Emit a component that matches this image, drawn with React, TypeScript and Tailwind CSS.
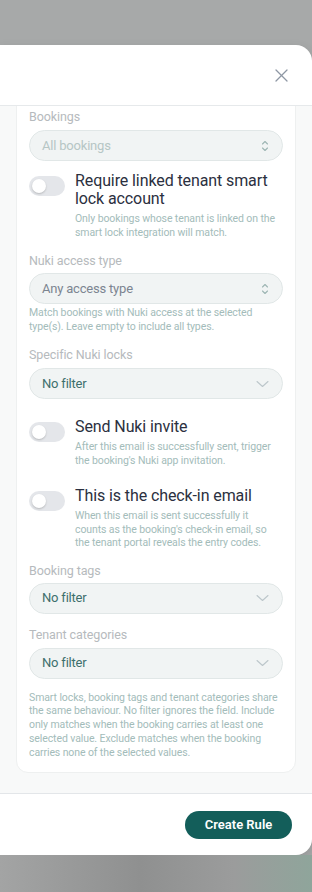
import React from "react";

const font = { fontFamily: 'Roboto, "Noto Sans", sans-serif' };

function UpDown() {
  return (
    <svg width="8" height="12" viewBox="0 0 8 12" fill="none" stroke="#9db6b4" strokeWidth="1.1" strokeLinecap="round" strokeLinejoin="round">
      <path d="M1.5 4 L4 1.5 L6.5 4" />
      <path d="M1.5 8 L4 10.5 L6.5 8" />
    </svg>
  );
}

function Down() {
  return (
    <svg width="13" height="8" viewBox="0 0 13 8" fill="none" stroke="#bcc6ca" strokeWidth="1.1" strokeLinecap="round" strokeLinejoin="round">
      <path d="M1 1.5 L6.5 6.5 L12 1.5" />
    </svg>
  );
}

function Select({ text, color, icon }: { text: string; color: string; icon: "updown" | "down" }) {
  return (
    <div className="flex h-[31px] items-center justify-between rounded-full border border-[#e1e7e7] bg-[#f1f4f4] pl-3 pr-[13px]">
      <span className={`text-[13px] tracking-[-0.2px] ${color}`}>{text}</span>
      {icon === "updown" ? <UpDown /> : <Down />}
    </div>
  );
}

function Toggle() {
  return (
    <div className="mt-1 flex h-5 w-9 shrink-0 items-center rounded-full bg-[#e4e6ea] pl-[3px]">
      <div className="h-[14px] w-[14px] rounded-full bg-white shadow-[0_1px_2px_rgba(0,0,0,0.2)]" />
    </div>
  );
}

function ToggleRow({ title, desc, className }: { title: string; desc: React.ReactNode; className: string }) {
  return (
    <div className={`flex items-start gap-[10px] ${className}`}>
      <Toggle />
      <div className="flex flex-col">
        <div className="text-[16px] leading-[18px] tracking-[-0.1px] text-[#2b3040]">{title}</div>
        <div className="mt-1 text-[10.5px] leading-[13.5px] tracking-[-0.1px] text-[#a3bcba]">{desc}</div>
      </div>
    </div>
  );
}

function Label({ children, className }: { children: React.ReactNode; className: string }) {
  return <div className={`text-[12.5px] leading-4 tracking-[-0.1px] text-[#b6babd] ${className}`}>{children}</div>;
}

export default function App() {
  return (
    <div className="flex h-[892px] w-[312px] flex-col overflow-hidden bg-[#a7a9a9]" style={font}>
      <div className="h-[45px] shrink-0" />
      <div className="flex h-[810px] shrink-0 flex-col overflow-hidden rounded-r-2xl bg-white shadow-[0_4px_12px_rgba(0,0,0,0.12)]">
        <div className="flex h-[61px] shrink-0 items-center justify-end border-b border-[#e6e9eb] pr-[24px]">
          <svg width="13" height="13" viewBox="0 0 13 13" fill="none" stroke="#8e97a4" strokeWidth="1.3" strokeLinecap="round">
            <path d="M1 1 L12 12" />
            <path d="M12 1 L1 12" />
          </svg>
        </div>
        <div className="h-[687px] shrink-0 overflow-hidden bg-[#f8f9f9] px-4">
          <div className="-mt-4 flex flex-col rounded-xl border border-[#eef0f0] bg-white px-3 pb-[13px] pt-[18px]">
            <Label className="">Bookings</Label>
            <div className="mt-[5px]">
              <Select text="All bookings" color="text-[#b6c6c5]" icon="updown" />
            </div>
            <ToggleRow
              className="mt-[11px]"
              title="Require linked tenant smart lock account"
              desc="Only bookings whose tenant is linked on the smart lock integration will match."
            />
            <Label className="mt-[14px]">Nuki access type</Label>
            <div className="mt-[4px]">
              <Select text="Any access type" color="text-[#7c8591]" icon="updown" />
            </div>
            <div className="mt-[2px] text-[10.5px] leading-[13.5px] tracking-[-0.1px] text-[#a3bcba]">
              Match bookings with Nuki access at the selected type(s). Leave empty to include all types.
            </div>
            <Label className="mt-[14px]">Specific Nuki locks</Label>
            <div className="mt-[5px]">
              <Select text="No filter" color="text-[#3e6f6d]" icon="down" />
            </div>
            <ToggleRow
              className="mt-[19px]"
              title="Send Nuki invite"
              desc="After this email is successfully sent, trigger the booking's Nuki app invitation."
            />
            <ToggleRow
              className="mt-[20px]"
              title="This is the check-in email"
              desc={
                <>
                  When this email is sent successfully it
                  <br />
                  counts as the booking's check-in email, so the tenant portal reveals the entry codes.
                </>
              }
            />
            <Label className="mt-[13px]">Booking tags</Label>
            <div className="mt-[4px]">
              <Select text="No filter" color="text-[#3e6f6d]" icon="down" />
            </div>
            <Label className="mt-[13px]">Tenant categories</Label>
            <div className="mt-[5px]">
              <Select text="No filter" color="text-[#3e6f6d]" icon="down" />
            </div>
            <div className="mt-[12px] text-[10.5px] leading-[13.75px] tracking-[-0.1px] text-[#a3bcba]">
              Smart locks, booking tags and tenant categories share the same behaviour. No filter ignores the field. Include only matches when the booking carries at least one selected value. Exclude matches when the booking carries none of the selected values.
            </div>
          </div>
        </div>
        <div className="flex flex-1 items-start justify-end border-t border-[#e3e6e9] pr-[20px] pt-[17px]">
          <button className="flex h-[28px] w-[107px] items-center justify-center rounded-full bg-[#135e5a] text-[13px] font-semibold text-white">
            Create Rule
          </button>
        </div>
      </div>
      <div className="flex-1 bg-[linear-gradient(90deg,#a3a4a4_0%,#8f9090_45%,#9b9c9c_75%,#8fa59b_100%)]" />
    </div>
  );
}
